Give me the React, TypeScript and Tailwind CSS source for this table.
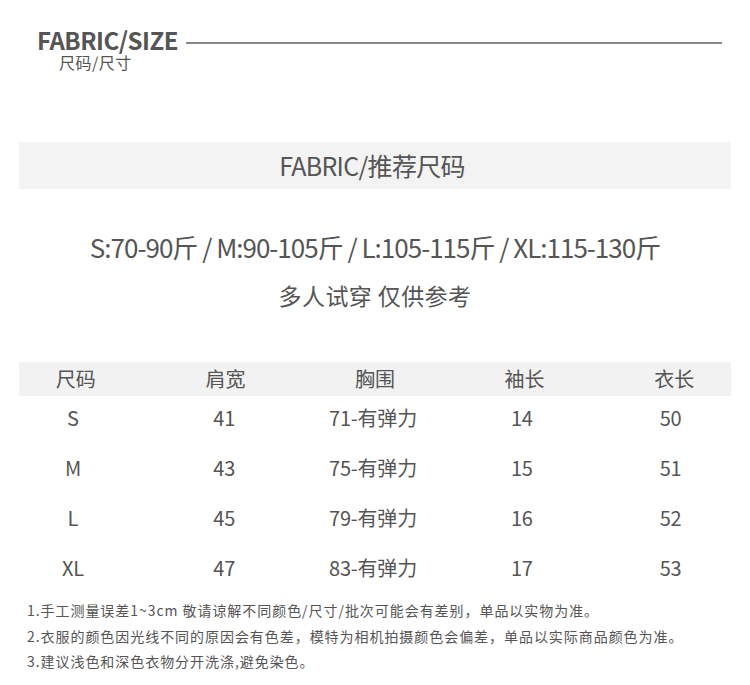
import React from 'react'

const rows = [
  { size: 'S', shoulder: '41', chest: '71-有弹力', sleeve: '14', length: '50' },
  { size: 'M', shoulder: '43', chest: '75-有弹力', sleeve: '15', length: '51' },
  { size: 'L', shoulder: '45', chest: '79-有弹力', sleeve: '16', length: '52' },
  { size: 'XL', shoulder: '47', chest: '83-有弹力', sleeve: '17', length: '53' },
]

const headers = ['尺码', '肩宽', '胸围', '袖长', '衣长']

const notes = [
  '1.手工测量误差1~3cm 敬请谅解不同颜色/尺寸/批次可能会有差别，单品以实物为准。',
  '2.衣服的颜色因光线不同的原因会有色差，模特为相机拍摄颜色会偏差，单品以实际商品颜色为准。',
  '3.建议浅色和深色衣物分开洗涤,避免染色。',
]

export default function App() {
  return (
    <div className="w-[750px] h-[685px] bg-white text-[#555] overflow-hidden font-['Noto_Sans_CJK_SC','Noto_Sans',sans-serif]">
      {/* title */}
      <div className="pt-[28px] pl-[37px] pr-[28px]">
        <div className="flex items-center gap-[8px]">
          <span className="text-[24px] leading-[24px] font-bold tracking-[-0.5px]">FABRIC/SIZE</span>
          <div className="flex-1 h-[2px] bg-[#888] mt-[6px]" />
        </div>
        <div className="pl-[22px] text-[16px] leading-[20px] tracking-[0.5px]">尺码/尺寸</div>
      </div>

      <div className="mx-[19px] mt-[70px] h-[47px] bg-[#f3f3f3] flex items-center justify-center">
        <span className="pr-[6px] text-[25px] tracking-[-0.7px]">FABRIC/推荐尺码</span>
      </div>

      <div className="mt-[41px] text-center text-[26px] leading-[34px] tracking-[-1px]">
        S:70-90斤 / M:90-105斤 / L:105-115斤 / XL:115-130斤
      </div>
      <div className="mt-[16px] text-center text-[23px] leading-[30px] tracking-[0.4px]">多人试穿 仅供参考</div>

      {/* table */}
      <div className="mt-[52px] mx-[19px] h-[34px] bg-[#f2f2f2]">
        <div className="-mx-[18px] h-full grid grid-cols-5 items-center text-[20px]">
          {headers.map((h) => (
            <div key={h} className="text-center">{h}</div>
          ))}
        </div>
      </div>
      <div className="w-[744px] ml-[1px] -mt-[3px]">
        {rows.map((r) => (
          <div key={r.size} className="h-[50px] grid grid-cols-5 items-center text-[20px] tracking-[-0.2px]">
            <div className="text-center pr-[5px]">{r.size}</div>
            <div className="text-center">{r.shoulder}</div>
            <div className="text-center">{r.chest}</div>
            <div className="text-center">{r.sleeve}</div>
            <div className="text-center">{r.length}</div>
          </div>
        ))}
      </div>

      <div className="mt-[5px] pl-[27px] text-[14px] leading-[25.5px] tracking-[0.95px]">
        {notes.map((n) => (
          <div key={n}>{n}</div>
        ))}
      </div>
    </div>
  )
}
